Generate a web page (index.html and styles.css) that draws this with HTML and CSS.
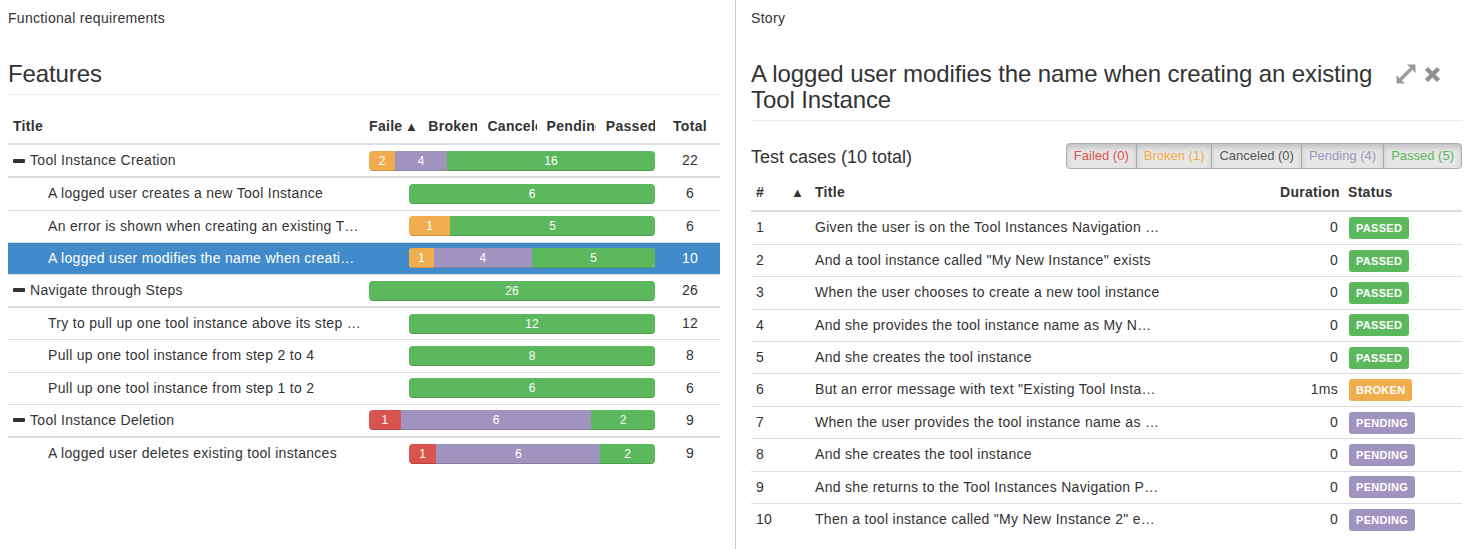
FILE: index.html
```html
<!DOCTYPE html>
<html>
<head>
<meta charset="utf-8">
<title>Features</title>
<link rel="stylesheet" href="styles.css">
</head>
<body>
<div class="layout">
  <section class="panel panel-left">
    <div class="panel-label">Functional requirements</div>
    <h3 class="page-header">Features</h3>
    <table class="features">
      <colgroup>
        <col class="c-title"><col class="c-stat"><col class="c-stat"><col class="c-stat"><col class="c-stat"><col class="c-stat"><col class="c-total">
      </colgroup>
      <thead>
        <tr>
          <th>Title</th>
          <th class="stat-th"><div class="th-flex"><span class="clip">Failed</span><span class="caret">▲</span></div></th>
          <th class="stat-th"><div class="clip">Broken</div></th>
          <th class="stat-th"><div class="clip">Canceled</div></th>
          <th class="stat-th"><div class="clip">Pending</div></th>
          <th class="stat-th"><div class="clip">Passed</div></th>
          <th class="center">Total</th>
        </tr>
      </thead>
      <tbody>
        <tr class="group">
          <td><span class="minus"></span>Tool Instance Creation</td>
          <td colspan="5"><div class="progress"><div class="seg broken" style="width:9.09%">2</div><div class="seg pending" style="width:18.18%">4</div><div class="seg passed" style="width:72.73%">16</div></div></td>
          <td class="center">22</td>
        </tr>
        <tr>
          <td class="child">A logged user creates a new Tool Instance</td>
          <td colspan="5"><div class="progress indent"><div class="seg passed" style="width:100%">6</div></div></td>
          <td class="center">6</td>
        </tr>
        <tr>
          <td class="child">An error is shown when creating an existing T…</td>
          <td colspan="5"><div class="progress indent"><div class="seg broken" style="width:16.67%">1</div><div class="seg passed" style="width:83.33%">5</div></div></td>
          <td class="center">6</td>
        </tr>
        <tr class="selected">
          <td class="child">A logged user modifies the name when creati…</td>
          <td colspan="5"><div class="progress indent"><div class="seg broken" style="width:10%">1</div><div class="seg pending" style="width:40%">4</div><div class="seg passed" style="width:50%">5</div></div></td>
          <td class="center">10</td>
        </tr>
        <tr class="group">
          <td><span class="minus"></span>Navigate through Steps</td>
          <td colspan="5"><div class="progress"><div class="seg passed" style="width:100%">26</div></div></td>
          <td class="center">26</td>
        </tr>
        <tr>
          <td class="child">Try to pull up one tool instance above its step …</td>
          <td colspan="5"><div class="progress indent"><div class="seg passed" style="width:100%">12</div></div></td>
          <td class="center">12</td>
        </tr>
        <tr>
          <td class="child">Pull up one tool instance from step 2 to 4</td>
          <td colspan="5"><div class="progress indent"><div class="seg passed" style="width:100%">8</div></div></td>
          <td class="center">8</td>
        </tr>
        <tr>
          <td class="child">Pull up one tool instance from step 1 to 2</td>
          <td colspan="5"><div class="progress indent"><div class="seg passed" style="width:100%">6</div></div></td>
          <td class="center">6</td>
        </tr>
        <tr class="group">
          <td><span class="minus"></span>Tool Instance Deletion</td>
          <td colspan="5"><div class="progress"><div class="seg failed" style="width:11.11%">1</div><div class="seg pending" style="width:66.67%">6</div><div class="seg passed" style="width:22.22%">2</div></div></td>
          <td class="center">9</td>
        </tr>
        <tr class="last">
          <td class="child">A logged user deletes existing tool instances</td>
          <td colspan="5"><div class="progress indent"><div class="seg failed" style="width:11.11%">1</div><div class="seg pending" style="width:66.67%">6</div><div class="seg passed" style="width:22.22%">2</div></div></td>
          <td class="center">9</td>
        </tr>
      </tbody>
    </table>
  </section>

  <section class="panel panel-right">
    <div class="panel-label">Story</div>
    <div class="story-header">
      <h3 class="story-title">A logged user modifies the name when creating an existing Tool Instance</h3>
      <div class="story-tools">
        <svg class="icon" width="22" height="22" viewBox="0 0 22 22" aria-label="Expand">
          <path d="M12 1.5H20.5V10Z M1.5 12V20.5H10Z" fill="#9a9a9a"/>
          <path d="M5.5 16.5L16.5 5.5" stroke="#9a9a9a" stroke-width="3.2" fill="none"/>
        </svg>
        <svg class="icon" width="17" height="17" viewBox="0 0 17 17" aria-label="Close">
          <path d="M2.5 2.5L14.5 14.5M14.5 2.5L2.5 14.5" stroke="#8f8f8f" stroke-width="4.4" fill="none"/>
        </svg>
      </div>
    </div>
    <div class="cases-bar">
      <h4 class="cases-title">Test cases (10 total)</h4>
      <div class="btn-group">
        <span class="btn t-failed">Failed (0)</span>
        <span class="btn t-broken">Broken (1)</span>
        <span class="btn t-canceled">Canceled (0)</span>
        <span class="btn t-pending">Pending (4)</span>
        <span class="btn t-passed">Passed (5)</span>
      </div>
    </div>
    <table class="cases">
      <colgroup>
        <col class="k-num"><col class="k-sort"><col class="k-title"><col class="k-dur"><col class="k-status">
      </colgroup>
      <thead>
        <tr><th>#</th><th class="sort">▲</th><th>Title</th><th class="right">Duration</th><th>Status</th></tr>
      </thead>
      <tbody>
        <tr><td>1</td><td></td><td>Given the user is on the Tool Instances Navigation …</td><td class="right">0</td><td><span class="label l-passed">Passed</span></td></tr>
        <tr><td>2</td><td></td><td>And a tool instance called "My New Instance" exists</td><td class="right">0</td><td><span class="label l-passed">Passed</span></td></tr>
        <tr><td>3</td><td></td><td>When the user chooses to create a new tool instance</td><td class="right">0</td><td><span class="label l-passed">Passed</span></td></tr>
        <tr><td>4</td><td></td><td>And she provides the tool instance name as My N…</td><td class="right">0</td><td><span class="label l-passed">Passed</span></td></tr>
        <tr><td>5</td><td></td><td>And she creates the tool instance</td><td class="right">0</td><td><span class="label l-passed">Passed</span></td></tr>
        <tr><td>6</td><td></td><td>But an error message with text "Existing Tool Insta…</td><td class="right">1ms</td><td><span class="label l-broken">Broken</span></td></tr>
        <tr><td>7</td><td></td><td>When the user provides the tool instance name as …</td><td class="right">0</td><td><span class="label l-pending">Pending</span></td></tr>
        <tr><td>8</td><td></td><td>And she creates the tool instance</td><td class="right">0</td><td><span class="label l-pending">Pending</span></td></tr>
        <tr><td>9</td><td></td><td>And she returns to the Tool Instances Navigation P…</td><td class="right">0</td><td><span class="label l-pending">Pending</span></td></tr>
        <tr class="last"><td>10</td><td></td><td>Then a tool instance called "My New Instance 2" e…</td><td class="right">0</td><td><span class="label l-pending">Pending</span></td></tr>
      </tbody>
    </table>
  </section>
</div>
</body>
</html>
```

FILE: styles.css
```css
* { box-sizing: border-box; }

html, body {
  margin: 0;
  padding: 0;
  background: #fff;
}

body {
  font-family: "Liberation Sans", Arial, "DejaVu Sans", sans-serif;
  font-size: 14px;
  line-height: 20px;
  letter-spacing: 0.3px;
  color: #333;
}

.layout {
  display: flex;
  min-height: 100vh;
}

.panel-left {
  width: 736px;
  flex: none;
  padding: 8px 15px 0 8px;
  border-right: 1px solid #ccc;
}

.panel-right {
  flex: 1;
  min-width: 0;
  padding: 8px 10px 0 15px;
}

.panel-label {
  line-height: 20px;
}

.page-header,
.story-title {
  margin: 33px 0 0;
  font-size: 24px;
  line-height: 26px;
  font-weight: normal;
  letter-spacing: -0.1px;
  color: #333;
}

.page-header {
  padding-bottom: 7px;
  border-bottom: 1px solid #eee;
}

.story-header {
  display: flex;
  align-items: flex-start;
  margin-top: 33px;
  padding-bottom: 7px;
  border-bottom: 1px solid #eee;
}

.story-title {
  margin: 0;
  flex: 1;
  min-width: 0;
}

.story-tools {
  display: flex;
  align-items: center;
  gap: 7px;
  margin-left: 14px;
  padding-top: 2px;
  padding-right: 21px;
}

.icon { display: block; }

/* Features table */
table {
  border-collapse: collapse;
  border-spacing: 0;
  table-layout: fixed;
  width: 100%;
}

.features { margin-top: 16px; }

.c-title { width: 356px; }
.c-stat { width: 59.2px; }
.c-total { width: 60px; }

th, td {
  padding: 5px;
  line-height: 21.2px;
  vertical-align: middle;
  text-align: left;
  white-space: nowrap;
}

th {
  font-weight: bold;
  padding-bottom: 6px;
  border-bottom: 2px solid #ddd;
}

td {
  border-bottom: 1px solid #ddd;
}

tr.group td { border-bottom: 2px solid #ddd; }
tr.last td { border-bottom: none; }

.stat-th { overflow: hidden; }

.clip {
  overflow: hidden;
  white-space: nowrap;
  text-overflow: clip;
}

.th-flex {
  display: flex;
  align-items: center;
}

.th-flex .clip {
  flex: 0 1 auto;
  min-width: 0;
  max-width: 34px;
}

.caret {
  flex: none;
  font-size: 13px;
  margin-left: 2px;
  letter-spacing: 0;
}

.center { text-align: center; }
.right { text-align: right; }

.child { padding-left: 40px; }

.minus {
  display: inline-block;
  width: 12px;
  height: 4px;
  background: #333;
  border-radius: 1px;
  vertical-align: middle;
  margin: -2px 5px 0 0;
}

tr.selected td {
  background: #428bca;
  color: #fff;
}

.progress {
  display: flex;
  height: 20px;
  border-radius: 4px;
  overflow: hidden;
  background: #f5f5f5;
  letter-spacing: 0;
}

.progress.indent { margin-left: 40px; }

.seg {
  flex: none;
  height: 20px;
  font-size: 12px;
  line-height: 20px;
  color: #fff;
  text-align: center;
  box-shadow: inset 0 -1px 0 rgba(0, 0, 0, 0.15);
}

.seg.passed { background: #5cb85c; }
.seg.broken { background: #f0ad4e; }
.seg.pending { background: #9f94c0; }
.seg.failed { background: #d9534f; }

/* Test cases */
.cases-bar {
  display: flex;
  align-items: center;
  justify-content: space-between;
  margin-top: 22px;
}

.cases-title {
  margin: 0;
  font-size: 18px;
  line-height: 20px;
  font-weight: normal;
  letter-spacing: 0;
  padding-top: 2px;
}

.btn-group {
  display: flex;
}

.btn {
  display: block;
  font-size: 13px;
  line-height: 18px;
  letter-spacing: 0;
  padding: 3px 7px;
  border: 1px solid #adadad;
  background: linear-gradient(#dcdcdc, #e6e6e6 40%, #e6e6e6);
  box-shadow: inset 0 3px 5px rgba(0, 0, 0, 0.125);
  margin-left: -1px;
  white-space: nowrap;
}

.btn:first-child { border-radius: 4px 0 0 4px; margin-left: 0; }
.btn:last-child { border-radius: 0 4px 4px 0; }

.t-failed { color: #d9534f; }
.t-broken { color: #f0ad4e; }
.t-canceled { color: #555; }
.t-pending { color: #9f94c0; }
.t-passed { color: #5cb85c; }

.cases { margin-top: 8px; }

.cases th, .cases td { line-height: 21.4px; }
.cases th { padding-bottom: 7px; }

.k-num { width: 35px; }
.k-sort { width: 24px; }
.k-title { width: 465px; }
.k-dur { width: 68px; }
.k-status { width: 119px; }

.cases th.sort {
  font-weight: normal;
  font-size: 13px;
  letter-spacing: 0;
}

.cases td:last-child { padding-left: 6px; }

.label {
  display: inline-block;
  vertical-align: top;
  height: 22px;
  line-height: 22px;
  margin: -0.3px 0;
  padding: 0 7px;
  border-radius: 3px;
  font-size: 11px;
  font-weight: bold;
  letter-spacing: 0.3px;
  text-transform: uppercase;
  color: #fff;
}

.l-passed { background: #5cb85c; }
.l-broken { background: #f0ad4e; }
.l-pending { background: #9f94c0; }
```
